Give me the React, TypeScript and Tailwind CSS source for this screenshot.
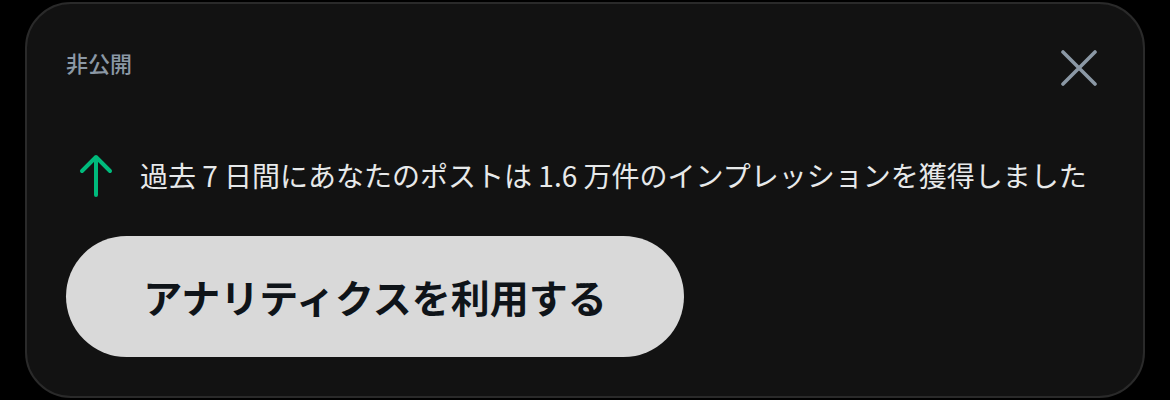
const font = { fontFamily: '"Noto Sans CJK JP", "Noto Sans", sans-serif' };

function ArrowUp() {
  return (
    <svg width="36" height="44" viewBox="0 0 36 44" fill="none" className="shrink-0">
      <path
        d="M18 42V4M4 18L18 4L32 18"
        stroke="#00ba7c"
        strokeWidth="4"
        strokeLinecap="round"
        strokeLinejoin="round"
      />
    </svg>
  );
}

function Close() {
  return (
    <svg width="36" height="36" viewBox="0 0 36 36" fill="none">
      <path d="M2 2L34 34M34 2L2 34" stroke="#8b98a5" strokeWidth="3.6" strokeLinecap="round" />
    </svg>
  );
}

export default function App() {
  return (
    <div className="h-[400px] w-[1170px] bg-black pt-[2px] pl-[25px]" style={font}>
      <div className="flex h-[396px] w-[1120px] flex-col rounded-[46px] border-2 border-[#2a2a2a] bg-[#121212] pl-[39px] pr-[46px]">
        <div className="flex items-center justify-between pt-[46px]">
          <span className="mb-[12px] text-[22px] font-medium leading-none text-[#8b98a5]">非公開</span>
          <Close />
        </div>
        <div className="mt-[67px] flex items-center gap-[26px] pl-[12px]">
          <ArrowUp />
          <span className="text-[28px] leading-none text-[#e7e9ea]">
            過去 7 日間にあなたのポストは 1.6 万件のインプレッションを獲得しました
          </span>
        </div>
        <button
          type="button"
          className="mt-[39px] flex h-[121px] w-[618px] items-center justify-center rounded-full bg-[#d9d9d9] text-[39px] font-bold text-[#0f1419]"
        >
          アナリティクスを利用する
        </button>
      </div>
    </div>
  );
}
